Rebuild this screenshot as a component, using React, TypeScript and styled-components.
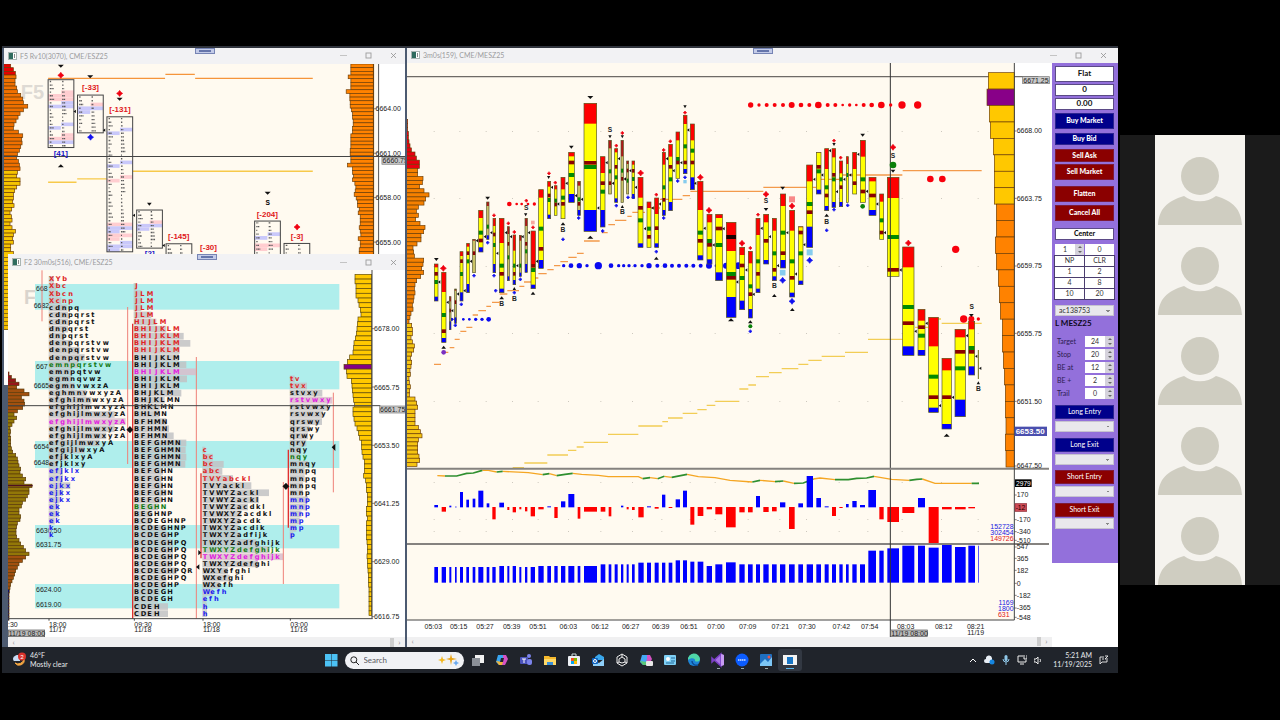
import React from "react";
import styled, { createGlobalStyle } from "styled-components";

const UI = `Lato, "Open Sans", sans-serif`;
const CHART = `"Liberation Sans", Arial, sans-serif`;
const CREAM = "#fffaf0";

const Global = createGlobalStyle`
  *, *::before, *::after { box-sizing: border-box; }
  body { margin: 0; background: #000; font-family: ${UI}; }
  button, input, select { font-family: inherit; margin: 0; }
`;

/* ---------- page frame ---------- */

const Page = styled.main`
  display: flex;
  align-items: center;
  gap: 2px;
  min-height: 100vh;
  padding-left: 2px;
  background: #000;
`;
const Desktop = styled.section`
  flex: 1;
  min-width: 0;
  background: #4c5a70;
  border-top: 2px solid #30343d;
  border-bottom: 1px solid #000;
`;
const Workspace = styled.div`
  display: grid;
  grid-template-columns: 401fr 711fr;
  gap: 2px;
  padding-left: 2px;
`;
const LeftStack = styled.div`
  display: flex;
  flex-direction: column;
  min-width: 0;
`;
const LowerRow = styled.div`
  display: flex;
`;
const HiddenEdge = styled.div`
  width: 4px;
  flex: none;
  background:
    repeating-linear-gradient(transparent 0 3px, #8a6a10 3px 4px) 0 0 / 100% 76px no-repeat,
    linear-gradient(#ffc800, #f0bc00) 0 0 / 100% 76px no-repeat,
    linear-gradient(#fff, #fff) 0 76px / 100% 55px no-repeat;
`;
const Frame = styled.article`
  position: relative;
  flex: 1;
  min-width: 0;
  display: flex;
  flex-direction: column;
  background: #fff;
`;
const TitleBar = styled.header<{ $h: number; $end: number }>`
  height: ${(p) => p.$h}px;
  display: flex;
  align-items: center;
  gap: 3px;
  padding: 0 ${(p) => p.$end}px 0 4px;
  background: #f2f2f4;
  color: #9b9b9d;
  font-size: 7px;
  line-height: 10px;
`;
const TitleText = styled.h2`
  flex: 1;
  margin: 0;
  font-size: 7px;
  font-weight: 400;
  white-space: nowrap;
`;
const WinButtons = styled.div`
  display: flex;
  gap: 16px;
`;
const WinButton = styled.button`
  width: 9px;
  height: 9px;
  padding: 0;
  border: 0;
  background: none;
  display: grid;
  place-items: center;
`;
const DockTab = styled.span`
  position: absolute;
  top: 0;
  left: 50%;
  width: 20px;
  height: 6px;
  transform: translateX(-50%);
  background: #c3cbe8;
  border: 1px solid #7684b4;
  &::after {
    content: "";
    display: block;
    margin: 1px 3px;
    height: 2px;
    background: #6575ab;
  }
`;
const Plot = styled.svg`
  display: block;
  width: 100%;
  height: auto;
  font-family: ${CHART};
`;
const ScrollTrack = styled.div`
  height: 10px;
  display: flex;
  align-items: center;
  justify-content: flex-end;
  gap: 3px;
  padding: 0 3px;
  background: #f0f0f1;
`;
const ScrollArrow = styled.button<{ $first?: boolean }>`
  width: 5px;
  height: 8px;
  padding: 0;
  border: 0;
  background: none;
  color: #8c8c8c;
  font-size: 8px;
  line-height: 7px;
  margin-right: ${(p) => (p.$first ? "auto" : "0")};
`;
const ScrollThumb = styled.span`
  width: 4px;
  height: 9px;
  background: #cdcdcd;
`;
const TradeBody = styled.div`
  display: flex;
  flex: 1;
`;
const ChartColumn = styled.div`
  flex: 1;
  min-width: 0;
`;

function WindowFrame({ title, bar, end = 7, children }: { title: string; bar: number; end?: number; children: React.ReactNode }) {
  return (
    <Frame>
      <TitleBar $h={bar} $end={end}>
        <svg width="9" height="8" viewBox="0 0 9 8" aria-hidden="true">
          <rect x=".5" y=".5" width="8" height="7" fill="#fff" stroke="#a9b5b2" />
          <rect x="1" y="1" width="4" height="6" fill="#2f6b5e" />
          <rect x="6" y="2" width="1" height="4" fill="#888" />
        </svg>
        <TitleText>{title}</TitleText>
        <WinButtons>
          <WinButton aria-label="Minimize">
            <svg width="7" height="7"><path d="M0 3.5H7" stroke="#c4c4c4" /></svg>
          </WinButton>
          <WinButton aria-label="Maximize">
            <svg width="7" height="7"><rect x="1" y="1" width="5" height="5" fill="none" stroke="#9c9c9c" strokeWidth=".9" /></svg>
          </WinButton>
          <WinButton aria-label="Close">
            <svg width="7" height="7"><path d="M1 1L6 6M6 1L1 6" stroke="#8f8f8f" strokeWidth=".8" /></svg>
          </WinButton>
        </WinButtons>
      </TitleBar>
      <DockTab />
      {children}
    </Frame>
  );
}

function Scroller() {
  return (
    <ScrollTrack>
      <ScrollArrow $first aria-label="Scroll left">‹</ScrollArrow>
      <ScrollThumb />
      <ScrollArrow aria-label="Scroll right">›</ScrollArrow>
    </ScrollTrack>
  );
}

/* ---------- chart pieces: three chart units to one pixel ---------- */

type MarkKind = "down" | "up" | "downS" | "upS" | "downL" | "upL" | "left" | "right" | "red" | "redS" | "blue" | "blueS";

function Mark({ kind, x, y }: { kind: MarkKind; x: number; y: number }) {
  if (kind === "left")
    return <path d={`M${x - 5} ${y}l7 -5v10z`} fill="#111" />;
  if (kind === "right") return <path d={`M${x + 6} ${y}l-9 -8v16z`} fill="#111" />;
  if (kind.startsWith("red") || kind.startsWith("blue")) {
    const r = kind.endsWith("S") ? 5 : 9;
    const t = r * 0.42;
    return (
      <path
        d={`M${x} ${y - r}L${x + t} ${y - t}L${x + r} ${y}L${x + t} ${y + t}L${x} ${y + r}L${x - t} ${y + t}L${x - r} ${y}L${x - t} ${y - t}Z`}
        fill={kind.startsWith("red") ? "#f00010" : "#1010f0"}
        stroke={kind.startsWith("red") ? "#f00010" : "#1010f0"}
        strokeWidth="2"
      />
    );
  }
  const w = kind.endsWith("S") ? 5 : kind.endsWith("L") ? 9 : 7;
  const d = kind.startsWith("down") ? 1 : -1;
  return <path d={`M${x - w} ${y - 4 * d}h${w * 2}l${-w} ${9 * d}z`} fill="#111" />;
}

function Profile(p: {
  x: number; y: number; pitch: number; rows: number[]; toLeft?: boolean;
  fill: (y: number, i: number) => string; line?: string;
}) {
  return (
    <g stroke={p.line ?? "#6b3c05"} strokeWidth="2">
      {p.rows.map((w, i) => {
        const y = p.y + i * p.pitch;
        return <rect key={i} x={p.toLeft ? p.x - w : p.x} y={y} width={w} height={p.pitch} fill={p.fill(y, i)} />;
      })}
    </g>
  );
}

type Seg = [number, number, number];
function Dashes({ list, color }: { list: Seg[]; color: string }) {
  return <path d={list.map(([a, b, y]) => `M${a} ${y}H${b}`).join("")} stroke={color} strokeWidth="4" fill="none" />;
}

/* ---------- F5 footprint chart ---------- */

const f5Left = [22, 30, 36, 38, 35, 35, 40, 42, 52, 58, 60, 73, 60, 50, 44, 38, 32, 30, 45, 58, 55, 56, 52, 48, 42, 40, 45, 48, 50, 42, 40, 50, 50, 40, 34, 30, 30, 28, 32, 25, 20, 24, 26, 20, 26, 36, 30, 28, 30, 22, 22, 30];
const f5RightEdges = [450, 450, 450, 442, 450, 450, 450, 436, 447, 447, 448, 448, 452, 455, 455, 457, 457, 455, 455, 450, 450, 450, 450, 448, 448, 450, 450, 440, 455, 455, 458, 455, 462, 465, 463, 460, 466, 470, 470, 475, 472, 478, 478, 478, 475, 478, 480, 472, 478, 478, 475, 475];

interface PrintBox { x: number; top: number; bottom: number; tint: [number, "l" | "r" | "b", "p" | "b"][] }
const prints: PrintBox[] = [
  { x: 144, top: 107, bottom: 310, tint: [[3, "r", "p"], [4, "b", "p"], [5, "b", "p"], [6, "r", "b"], [7, "b", "b"], [12, "r", "b"], [13, "l", "b"], [15, "r", "p"], [16, "b", "p"], [17, "b", "b"]] },
  { x: 232, top: 153, bottom: 266, tint: [[2, "r", "p"], [3, "b", "b"], [4, "l", "b"]] },
  { x: 320, top: 218, bottom: 622, tint: [[3, "r", "b"], [4, "l", "b"], [12, "r", "b"], [13, "l", "b"], [16, "r", "p"], [17, "l", "p"], [29, "b", "p"], [30, "b", "b"], [31, "l", "b"], [32, "b", "p"], [33, "l", "p"], [34, "r", "b"], [35, "b", "b"], [36, "l", "b"]] },
  { x: 409, top: 497, bottom: 611, tint: [[3, "r", "p"], [4, "b", "b"], [5, "l", "b"]] },
  { x: 497, top: 598, bottom: 642, tint: [] },
  { x: 762, top: 530, bottom: 642, tint: [[3, "r", "b"], [4, "l", "b"], [6, "b", "p"], [7, "l", "p"]] },
  { x: 850, top: 597, bottom: 642, tint: [] },
];

function Footprint({ x, top, bottom, tint }: PrintBox) {
  const n = Math.round((bottom - top) / 10.8);
  const step = (bottom - top) / n;
  return (
    <g>
      <rect x={x} y={top} width="77" height={bottom - top} fill={CREAM} />
      {tint.map(([r, side, c], i) => (
        <rect
          key={i}
          x={side === "r" ? x + 39 : x}
          width={side === "b" ? 77 : 38}
          y={top + r * step}
          height={step}
          fill={c === "p" ? "#ffcdd0" : "#c9c8fa"}
        />
      ))}
      {Array.from({ length: n }, (_, r) => {
        const a = 3 + ((r * 37 + x) % 11);
        const b = 3 + ((r * 23 + x) % 11);
        return (
          <g key={r} stroke="#5a5a5a" strokeWidth="4" strokeDasharray="4 1">
            <path d={`M${x + 5} ${top + (r + 0.5) * step}h${a}M${x + 42} ${top + (r + 0.5) * step}h${b}`} />
          </g>
        );
      })}
      <rect x={x} y={top} width="77" height={bottom - top} fill="none" stroke="#444" strokeWidth="3" />
    </g>
  );
}

const f5Marks: [MarkKind, number, number][] = [
  ["downL", 182, 66], ["downL", 270, 98], ["downL", 358, 165], ["down", 447, 479], ["downL", 801, 446], ["upL", 182, 365],
  ["red", 182, 94], ["red", 358, 148], ["red", 889, 548], ["blue", 271, 279],
  ["left", 225, 202], ["left", 313, 258], ["left", 402, 513], ["left", 491, 603],
];
const f5Deltas: [string, number, number, string][] = [
  ["[-33]", 271, 137, "#e01820"], ["[-131]", 359, 204, "#e01820"], ["[41]", 182, 336, "#1515c8"], ["[-145]", 535, 584, "#e01820"],
  ["[2]", 448, 635, "#1515c8"], ["[-30]", 624, 617, "#e01820"], ["[-204]", 800, 517, "#e01820"], ["[-3]", 889, 584, "#e01820"],
];

function F5Chart() {
  return (
    <Plot viewBox="12 60 1200 570" role="img" aria-label="ESZ25 footprint chart">
      <rect x="12" y="60" width="1121" height="570" fill={CREAM} />
      <text x="62" y="164" fontSize="60" fontWeight="700" fill="#dedad4">F5</text>
      <Profile x={10} y={60} pitch={11} rows={f5Left} fill={(y) => (y < 93 ? "#e50000" : y < 370 ? "#f07000" : "#f5c400")} />
      <Profile x={1117} y={60} pitch={11} toLeft rows={f5RightEdges.map((e) => 517 - e)} fill={() => "#ff8200"} />
      <Dashes list={[[144, 494, 103], [495, 583, 91], [584, 936, 103]]} color="#f5953a" />
      <Dashes list={[[144, 229, 414], [231, 319, 404], [398, 936, 381]]} color="#f7c94a" />
      <path d="M1133 60V630" stroke="#555" strokeWidth="3" />
      <path d="M1118 60V630" stroke="#6b3c05" strokeWidth="3" />
      {prints.map((p) => <Footprint key={p.x} {...p} />)}
      <path d="M12 337H1215" stroke="#444" strokeWidth="3" />
      {f5Marks.map(([k, x, y], i) => <Mark key={i} kind={k} x={x} y={y} />)}
      <g fontSize="24" fontWeight="700" textAnchor="middle">
        {f5Deltas.map(([t, x, y, c]) => <text key={t} x={x} y={y} fill={c}>{t}</text>)}
      </g>
      <text x="801" y="483" fontSize="20" fontWeight="700" textAnchor="middle">S</text>
      <g fontSize="21" fill="#222">
        {["6664.00", "6661.00", "6658.00", "6655.00"].map((t, i) => (
          <React.Fragment key={t}>
            <path d={`M1118 ${194 + i * 133}h8`} stroke="#444" strokeWidth="2" />
            <text x="1124" y={202 + i * 133}>{t}</text>
          </React.Fragment>
        ))}
      </g>
      <rect x="1143" y="340" width="80" height="20" fill="#c9c9c9" stroke="#777" strokeWidth="2" />
      <text x="1145" y="357" fontSize="21" fill="#222">6660.75</text>
    </Plot>
  );
}

/* ---------- F2 market profile ---------- */

type Tpo = [string, number];
interface Session { x: number; first: number; rows: Tpo[]; ink: (row: number) => string }
const RED = "#e02424", BLUE = "#1c1cf0", GREEN = "#137a13", PINK = "#e020e0", INK = "#101010";

const sessions: Session[] = [
  {
    x: 147, first: 0,
    ink: (r) => (r < 4 ? RED : r === 12 ? GREEN : r === 20 ? PINK : r > 26 ? BLUE : INK),
    rows: [["XYb", 163], ["Xbc", 170], ["Xbcn", 175], ["Xcnp", 185], ["cdnpq", 203], ["cdnpqrst", 205], ["cdnpqrst", 205], ["dnpqrst", 205], ["dnpqrst", 195], ["denpqrstvw", 215], ["denpqrstvw", 240], ["denpqrstvw", 255], ["emnpqrstvw", 235], ["emnpqtvw", 215], ["egmnqvwz", 215], ["egmnvwxzA", 225], ["eghmnvwxyzA", 260], ["efghimnwxyzA", 275], ["efghijlmwxyzA", 270], ["efghijlmwxyzA", 345], ["efghijlmwxyzA", 378], ["efghijlmwxyzA", 345], ["efghijlmwxyzA", 320], ["efgijlmwxyA", 300], ["efgijlwxyA", 255], ["efjklxyA", 205], ["efjklxy", 175], ["efjklx", 190], ["efjkx", 190], ["ejkx", 212], ["ejkx", 190], ["ejkx", 180], ["ek", 178], ["ek", 178], ["ek", 165], ["k", 155], ["k", 153]],
  },
  {
    x: 402, first: 1,
    ink: (r) => (r < 11 ? RED : r === 13 ? PINK : r === 32 ? GREEN : INK),
    rows: [["J", 412], ["JLM", 425], ["JLM", 425], ["JLM", 425], ["JLM", 455], ["HIJLM", 470], ["BHIJKLM", 500], ["BHIJKLM", 552], ["BHIJKLM", 572], ["BHIJKLM", 540], ["BHIJKLM", 538], ["BHIJKLM", 560], ["BHIJKLM", 588], ["BHIJKLM", 562], ["BHIJKLM", 538], ["BHJKLM", 545], ["BHJKLMN", 495], ["BHKLMN", 480], ["BHLMN", 480], ["BFHMN", 500], ["BFHMN", 508], ["BFHMN", 522], ["BEFGHMN", 560], ["BEFGHMN", 558], ["BEFGHMN", 560], ["BEFGHMN", 557], ["BEFGHN", 490], ["BEFGHN", 485], ["BEFGHN", 490], ["BEFGHN", 500], ["BEFGHN", 485], ["BEGHN", 475], ["BEGHNP", 455], ["BCDEGHNP", 455], ["BCDEGHNP", 500], ["BCDEGHP", 505], ["BCDEGHPQ", 520], ["BCDEGHPQ", 520], ["BCDEGHPQ", 520], ["BCDEGHPQ", 515], ["BCDEGHPQR", 530], ["BCDEGHPQ", 500], ["BCDEGHP", 500], ["BCDEGH", 480], ["BCDEGH", 475], ["CDEH", 505], ["CDEH", 505]],
  },
  {
    x: 608, first: 24,
    ink: (r) => (r < 29 ? RED : r === 38 ? GREEN : r === 39 ? PINK : r > 43 ? BLUE : INK),
    rows: [["c", 617], ["bc", 640], ["bc", 672], ["abc", 668], ["TVYabckl", 700], ["TVYackl", 755], ["TVWYZackl", 808], ["TVWYZackl", 778], ["TVWYZacdkl", 745], ["TVWXYZacdkl", 725], ["TWXYZacdk", 720], ["TWXYZacdik", 715], ["TWXYZadfijk", 722], ["TWXYZadfghijk", 770], ["TWXYZdefghijk", 810], ["TWXYZdefghijk", 850], ["TWXYZdefghi", 775], ["WXYefghi", 685], ["WXefghi", 690], ["WXefh", 660], ["Wefh", 640], ["efh", 620], ["h", 622], ["h", 622]],
  },
  {
    x: 870, first: 14,
    ink: (r) => (r < 16 ? RED : r === 17 ? PINK : r === 25 ? GREEN : r > 30 ? BLUE : INK),
    rows: [["tv", 885], ["tvx", 922], ["stvxy", 968], ["rstvwxy", 998], ["rstvwxy", 985], ["rsvwxy", 970], ["qrswy", 967], ["qrswy", 930], ["qrwy", 925], ["qry", 920], ["nqy", 905], ["nqy", 900], ["mnqy", 925], ["mnpq", 915], ["mnpq", 915], ["mnpq", 910], ["mnp", 910], ["mnp", 925], ["mnp", 922], ["mnp", 905], ["mp", 900], ["mp", 890], ["p", 880]],
  },
];

const ROW = 21.34;
const cell = (ch: string) => {
  if ("ijl".includes(ch)) return 12;
  if ("frt".includes(ch)) return 15;
  if ("sz".includes(ch)) return 17;
  if ("IJL".includes(ch)) return 19;
  if ("MW".includes(ch)) return 23;
  if (ch === "w") return 24;
  if (ch === "m") return 26;
  return ch === ch.toUpperCase() ? 20 : 19;
};
const slots = (x: number, text: string) => {
  let at = x;
  return [...text].map((ch) => { const here = at + ("IJ".includes(ch) ? 4 : 0); at += cell(ch); return here; }).join(" ");
};

const f2Left = [5, 12, 25, 35, 28, 50, 65, 42, 50, 52, 46, 30, 20, 28, 20, 14, 8, 10, 8, 10, 10, 10, 12, 16, 25, 30, 32, 35, 40, 38, 45, 55, 50, 74, 65, 65, 60, 55, 45, 42, 35, 35, 40, 38, 30, 28, 26, 26, 28, 35, 40, 48, 55, 65, 55, 45, 35, 30, 25, 22, 18, 14, 10, 8, 6, 5, 5, 5, 5, 5, 5, 5, 5];
const f2RightEdges = [466, 466, 469, 469, 469, 475, 478, 482, 484, 475, 473, 472, 470, 467, 463, 462, 460, 450, 443, 433, 440, 442, 455, 457, 458, 460, 462, 465, 460, 460, 463, 466, 472, 476, 480, 485, 486, 487, 490, 494, 494, 494, 492, 498, 500, 500, 503, 503, 503, 500, 500, 503, 500, 500, 500, 500, 502, 503, 503, 502, 503, 504, 505, 506, 506, 507, 508, 508, 508, 508, 508, 508];

function F2Chart() {
  return (
    <Plot viewBox="24 54 1191 1101" role="img" aria-label="ESZ25 thirty minute market profile">
      <rect x="24" y="54" width="1092" height="1046" fill={CREAM} />
      {[[96, 77], [327, 85], [567, 81], [819, 70], [996, 73]].map(([y, h]) => (
        <rect key={y} x="105" y={y} width="913" height={h} fill="#afeeec" />
      ))}
      <text x="72" y="155" fontSize="58" fontWeight="700" fill="#d9d4cd">F</text>
      <g fontSize="21" fill="#222">
        {([["668", 118], ["6682", 168], ["667", 351], ["6665", 408], ["6654", 590], ["6648", 640], ["6630.50", 844], ["6631.75", 884], ["6624.00", 1020], ["6619.00", 1065]] as [string, number][]).map(([t, y]) => (
          <text key={y} x={t.length === 4 ? 101 : 108} y={y}>{t}</text>
        ))}
      </g>
      <Profile
        x={22} y={360} pitch={10.2} rows={f2Left} line="#5a3a08"
        fill={(y) => (y < 395 ? "#98151a" : y < 480 ? "#a2500f" : y < 910 ? "#927708" : y < 1010 ? "#a2500f" : "#101068")}
      />
      <path d="M24 701H98" stroke="#501020" strokeWidth="4" />
      <Profile x={1115} y={67} pitch={14.22} toLeft rows={f2RightEdges.map((e) => 516 - e)} fill={(_, i) => (i === 19 ? "#850085" : "#ffc800")} line="#5c4708" />
      {sessions.map((s) => (
        <g key={s.x}>
          {s.rows.map(([, end], i) => (
            <rect key={i} x={s.x - 1} y={81 + (s.first + i) * ROW - 9} width={end - s.x} height="20" fill={s.ink(s.first + i) === PINK ? "#d9bccb" : "#c2c2c4"} opacity=".85" />
          ))}
        </g>
      ))}
      <path d="M126 55V208M383 165V636M850 690V996M1000 422V721M589 315V1100" stroke="#ee8078" strokeWidth="3" />
      <path d="M398 215V1100M865 593V827M603 664V919" stroke="#e03030" strokeWidth="4" />
      {sessions.map((s) => (
        <g key={s.x} fontFamily='"DejaVu Sans", Verdana, sans-serif' fontWeight="700" fontSize="20">
          {s.rows.map(([t], i) => (
            <text key={i} x={slots(s.x, t)} y={88 + (s.first + i) * ROW} fill={s.ink(s.first + i)}>{t}</text>
          ))}
        </g>
      ))}
      <path d="M24 461H1141M24 1100H1118M1116 54V1100" stroke="#444" strokeWidth="3" />
      <path d="M380 533l10 -10 9 10 -9 10zM848 703l10 -10 9 10 -9 10z" fill="#111" stroke="#111" />
      <Mark kind="right" x={598} y={902} />
      <path d="M588 945l10 -8v16zM995 586l11 -11v22z" fill="#111" />
      <g fontSize="21" fill="#222">
        {([["6678.00", 230], ["6665.75", 405], ["6653.50", 580], ["6641.25", 754], ["6629.00", 929], ["6616.75", 1094]] as [string, number][]).map(([t, y]) => (
          <React.Fragment key={t}>
            <path d={`M1116 ${y}h7`} stroke="#444" strokeWidth="2" />
            <text x="1122" y={y + 8}>{t}</text>
          </React.Fragment>
        ))}
        <rect x="1139" y="462" width="79" height="21" fill="#c9c9c9" stroke="#777" strokeWidth="2" />
        <text x="1140" y="480">6661.75</text>
        <text x="24" y="1125">:30</text>
        {([["18:00", "11/17", 147], ["09:30", "11/18", 403], ["18:00", "11/18", 609], ["03:00", "11/19", 871]] as [string, string, number][]).map(([t, d, x]) => (
          <React.Fragment key={x}>
            <path d={`M${x} 1100v6`} stroke="#444" strokeWidth="3" />
            <text x={x} y="1124">{t}</text>
            <text x={x} y="1141">{d}</text>
          </React.Fragment>
        ))}
        <rect x="25" y="1134" width="109" height="20" fill="#b9b9b9" stroke="#555" strokeWidth="2" />
        <text x="26" y="1151">11/19 08:00</text>
      </g>
    </Plot>
  );
}

/* ---------- three minute MESZ25 chart ---------- */

/* x, width, high, red end, blue start, low, green level, maroon level, narrow */
type Candle = [number, number, number, number, number, number, number, number, boolean?];
const shift = (dx: number, list: Candle[]): Candle[] => list.map(([x, ...rest]) => [x + dx, ...rest] as Candle);

const candles: Candle[] = [
  [88, 11, 660, 670, 758, 771, 714, 690], [110, 13, 685, 744, 882, 895, 813, 862], [133, 5, 758, 772, 832, 857, 0, 800, true],
  [149, 5, 735, 740, 820, 838, 0, 775, true], [165, 9, 623, 636, 745, 771, 690, 652], [185, 8, 598, 608, 720, 746, 652, 628],
  [203, 8, 586, 590, 686, 686, 0, 628, true], [221, 13, 499, 522, 610, 624, 566, 590], [245, 7, 474, 486, 574, 586, 548, 0, true],
  [264, 8, 523, 546, 660, 686, 603, 572], [283, 14, 523, 597, 734, 746, 665, 690], [307, 6, 548, 570, 697, 710, 640, 600, true],
  [324, 8, 573, 620, 708, 722, 665, 690], [343, 6, 574, 590, 686, 697, 665, 0, true], [360, 7, 523, 546, 660, 685, 622, 600, true],
  [378, 13, 561, 660, 722, 734, 678, 666], [401, 14, 437, 461, 648, 673, 554, 615], [428, 9, 412, 428, 512, 524, 468, 455],
  [448, 8, 425, 436, 514, 514, 470, 482], [468, 12, 400, 436, 524, 524, 461, 480], [491, 17, 325, 337, 450, 475, 393, 356],
  [518, 8, 412, 425, 498, 514, 466, 480, true], [537, 38, 178, 239, 498, 562, 369, 357], [586, 14, 338, 387, 498, 549, 443, 418],
  [611, 8, 289, 313, 450, 450, 382, 418, true], [629, 9, 314, 325, 463, 475, 400, 369], [648, 7, 289, 337, 475, 475, 380, 405, true],
  [665, 6, 351, 360, 450, 450, 410, 380, true], [681, 8, 351, 362, 450, 463, 405, 381], [699, 15, 400, 461, 598, 610, 529, 492],
  ...shift(705, [
    [21, 12, 474, 492, 610, 610, 554, 579], [44, 12, 462, 510, 598, 610, 0, 553], [67, 9, 325, 362, 498, 514, 430, 468],
    [86, 11, 301, 338, 474, 500, 406, 369], [108, 11, 264, 289, 403, 403, 345, 356], [130, 11, 214, 240, 375, 389, 307, 356],
    [151, 12, 240, 289, 400, 437, 320, 356], [173, 16, 412, 498, 634, 648, 566, 591], [201, 15, 511, 535, 646, 660, 591, 603],
    [227, 20, 511, 522, 685, 710, 603, 554], [259, 29, 535, 621, 759, 820, 690, 702], [299, 15, 610, 633, 770, 797, 702, 665],
    [325, 12, 622, 658, 795, 822, 727, 751], [348, 12, 523, 573, 734, 746, 652, 690], [371, 15, 511, 535, 648, 660, 0, 591],
    [397, 12, 523, 560, 697, 710, 628, 678], [421, 16, 450, 486, 648, 672, 566, 628], [449, 15, 499, 560, 746, 759, 652, 702],
    [475, 14, 548, 550, 710, 722, 628, 566], [500, 18, 363, 412, 548, 610, 480, 505], [529, 14, 325, 326, 437, 450, 382, 369],
    [554, 12, 314, 375, 486, 500, 430, 455], [576, 11, 314, 340, 474, 490, 406, 393], [598, 10, 351, 388, 474, 488, 406, 430],
    [619, 6, 338, 360, 475, 475, 393, 0], [638, 12, 325, 375, 450, 450, 0, 418], [661, 15, 289, 338, 475, 475, 406, 443],
    [687, 21, 400, 412, 498, 514, 0, 455],
  ]),
  ...shift(1365, [
    [59, 12, 450, 473, 586, 586, 529, 566], [82, 35, 400, 462, 697, 697, 579, 678], [128, 34, 609, 670, 907, 934, 789, 838],
    [174, 21, 796, 830, 918, 934, 875, 850], [206, 29, 820, 907, 1091, 1105, 998, 1060], [246, 28, 943, 979, 1140, 1155, 0, 1060],
    [285, 31, 856, 880, 1067, 1118, 973, 924], [326, 18, 832, 856, 967, 993, 912, 924],
  ]),
];

function CandleBar({ c: [x, w, hi, red, blue, lo, green, maroon, narrow] }: { c: Candle }) {
  return (
    <g>
      <rect x={x} y={hi} width={w} height={lo - hi} fill={narrow ? "#c9c267" : "#ffff00"} />
      <rect x={x} y={hi} width={w} height={red - hi} fill={narrow ? "#b01818" : "#ff0000"} />
      <rect x={x} y={blue} width={w} height={lo - blue} fill="#0000ff" />
      {green > 0 && <rect x={x} y={green - 6} width={w} height="12" fill="#008a00" />}
      {maroon > 0 && <rect x={x} y={maroon - 6} width={w} height="11" fill="#8b0000" />}
      <rect x={x} y={hi} width={w} height={lo - hi} fill="none" stroke="#55552a" strokeWidth="2" />
    </g>
  );
}

const mark = (kind: MarkKind, dx: number, pts: [number, number][]): [MarkKind, number, number][] => pts.map(([x, y]) => [kind, x + dx, y]);
const tradeMarks = [
  ...mark("down", 0, [[94, 646], [248, 462], [499, 309]]),
  ...mark("downS", 0, [[362, 512], [615, 278], [652, 278], [431, 400]]),
  ...mark("downL", 0, [[556, 160]]),
  ...mark("up", 0, [[116, 910], [290, 762], [384, 748], [474, 540]]),
  ...mark("upS", 0, [[328, 734], [652, 488]]),
  ...mark("upL", 0, [[556, 580]]),
  ...mark("redS", 0, [[267, 514], [310, 538], [328, 564], [384, 550], [432, 388], [451, 416], [634, 305], [652, 267], [364, 470]]),
  ...mark("red", 0, [[115, 673], [707, 387]]),
  ...mark("blueS", 0, [[169, 781], [151, 844], [207, 695], [248, 596], [267, 695], [272, 740], [346, 706], [328, 746], [474, 586], [521, 522], [593, 561], [634, 485], [669, 460], [685, 460]]),
  ...mark("left", 0, [[104, 714], [129, 775], [143, 800], [160, 750], [180, 740], [199, 652], [217, 590], [241, 578], [260, 566], [278, 628], [304, 566], [319, 578], [338, 665], [354, 578], [373, 566], [397, 652], [442, 430], [461, 480], [486, 418], [514, 455], [532, 466], [581, 492], [606, 356], [625, 418], [643, 344], [661, 405], [677, 380], [694, 430]]),
  ...mark("downS", 705, [[135, 188], [582, 301]]),
  ...mark("down", 705, [[428, 432], [378, 496], [668, 273]]),
  ...mark("up", 705, [[49, 643], [331, 834], [403, 755], [457, 797], [560, 514]]),
  ...mark("upL", 705, [[273, 828]]),
  ...mark("red", 705, [[181, 400], [207, 499], [306, 598], [378, 451], [456, 486]]),
  ...mark("redS", 705, [[49, 452], [71, 318], [91, 292], [135, 206], [331, 612], [354, 512], [582, 290], [602, 341]]),
  ...mark("blueS", 705, [[49, 623], [71, 522], [113, 411], [135, 400], [331, 862], [560, 559], [582, 497], [623, 484]]),
  ...mark("blue", 705, [[428, 709], [456, 772], [509, 649]]),
  ...mark("left", 705, [[16, 554], [39, 492], [61, 480], [82, 344], [102, 380], [125, 356], [146, 258], [167, 418], [195, 553], [222, 603], [252, 554], [293, 714], [320, 678], [342, 751], [366, 553], [391, 578], [415, 665], [443, 566], [469, 690], [494, 602], [524, 406], [548, 393], [571, 320], [592, 443], [614, 406], [632, 393], [656, 331], [682, 442], [713, 480]]),
  ...mark("red", 1365, [[99, 310], [145, 597]]),
  ...mark("down", 1365, [[99, 381], [334, 814]]),
  ...mark("upL", 1365, [[260, 1174]]),
  ...mark("upS", 1365, [[355, 1017]]),
  ...mark("left", 1365, [[76, 566], [123, 678], [168, 862], [201, 838], [241, 1085], [280, 1060], [322, 875], [350, 937], [362, 973]]),
];

type Dot = [number, number, number];
const redDots: Dot[] = [
  [313, 480, 7], [335, 480, 4], [350, 480, 4], [369, 480, 4], [388, 480, 5],
  ...([[332, 8], [357, 5], [380, 6], [404, 6], [429, 6], [455, 9], [483, 7], [508, 6], [535, 10], [563, 6], [586, 6], [608, 4], [629, 5], [649, 4], [671, 6], [695, 7], [724, 10], [752, 5], [786, 11], [833, 11]] as [number, number][]).map(([x, r]) => [x + 705, 183, r] as Dot),
  [1576, 405, 10], [1612, 405, 10], [1652, 616, 11], [1676, 825, 11], [1699, 825, 9], [1720, 825, 5],
];
const blueDots: Dot[] = [
  ...([[140, 5], [151, 5], [175, 4], [193, 4], [212, 5], [231, 5], [251, 7]] as [number, number][]).map(([x, r]) => [x, 826, r] as Dot),
  ...([[476, 5], [498, 7], [523, 8], [546, 5], [580, 11], [618, 7], [641, 5], [656, 5], [672, 5], [690, 5], [711, 5], [732, 8], [757, 6], [780, 7], [801, 6], [822, 6], [844, 6], [865, 6], [887, 6], [912, 9], [933, 4], [963, 9], [1000, 10]] as [number, number][]).map(([x, r]) => [x, 665, r] as Dot),
];

const orangeSteps: Seg[] = [
  [87, 108, 961], [116, 130, 925], [134, 148, 911], [149, 164, 886], [166, 184, 862], [184, 202, 850], [203, 219, 813], [220, 243, 800], [244, 258, 787], [261, 283, 775], [284, 307, 750], [307, 342, 740], [343, 358, 727], [357, 378, 714], [390, 400, 702], [400, 425, 689], [427, 446, 677], [447, 466, 665], [466, 489, 653], [490, 515, 640], [516, 536, 628], [537, 584, 591], [590, 608, 566], [610, 630, 542], [630, 664, 529], [667, 680, 517], [682, 720, 505],
  [738, 765, 492], [765, 832, 466], [833, 855, 455], [856, 1075, 442], [1075, 1233, 430], [1233, 1305, 406], [1305, 1492, 393], [1493, 1730, 380],
];
const yellowSteps: Seg[] = [
  [323, 357, 1271], [358, 427, 1257], [427, 489, 1233], [489, 514, 1219], [515, 536, 1209], [536, 609, 1195], [609, 700, 1171], [700, 772, 1146], [772, 789, 1133], [789, 833, 1122], [833, 877, 1108], [877, 905, 1097], [905, 931, 1084], [931, 1003, 1072], [1003, 1030, 1035], [1030, 1053, 1023], [1053, 1092, 998], [1092, 1130, 986], [1130, 1180, 974], [1180, 1210, 961], [1210, 1250, 949], [1250, 1320, 937], [1320, 1389, 925], [1389, 1493, 886], [1530, 1570, 850], [1585, 1608, 825], [1610, 1730, 838],
];

const tradeLeft = [6, 6, 6, 8, 8, 10, 13, 17, 28, 32, 41, 41, 36, 36, 52, 50, 42, 55, 70, 60, 55, 38, 32, 38, 30, 43, 58, 54, 46, 46, 34, 22, 24, 26, 54, 52, 48, 54, 45, 33, 28, 26, 28, 25, 23, 20, 22, 16, 13, 10, 18, 20, 20, 16, 20, 26, 24, 18, 14, 18, 16, 13, 14, 10, 11, 14, 12, 11, 28, 33, 36, 28, 28, 28, 28, 38, 44, 49, 38, 36, 36, 36, 40, 42, 34];
const tradeRightEdges = [385, 381, 388, 391, 400, 403, 403, 403, 409, 409, 406, 409, 415, 418, 421, 427, 427, 430, 433, 436, 436, 438, 436, 438];

/* x, width, delta (positive is up), total */
const flow: [number, number, number, number][] = [
  [88, 11, 6, 47], [110, 13, -13, 47], [133, 6, 4, 47], [150, 5, 1, 47], [165, 9, 45, 47], [184, 8, 22, 47], [203, 8, 25, 47], [220, 15, 49, 47], [245, 8, 11, 47], [262, 10, -36, 47], [283, 14, 13, 50], [307, 6, -8, 50], [323, 10, -15, 50], [343, 6, -6, 47], [360, 7, -12, 47], [377, 13, -27, 47], [400, 16, -6, 50], [427, 11, 2, 50], [448, 10, -32, 50], [468, 13, 17, 50], [490, 18, 39, 50], [518, 8, -34, 50], [537, 39, -13, 50], [587, 14, -13, 55], [611, 8, -27, 55], [629, 9, 0, 55], [648, 7, 4, 55], [665, 6, -6, 55], [681, 8, -8, 55], [700, 16, -30, 60], [726, 12, 2, 60], [749, 12, -4, 60], [771, 10, 37, 60], [791, 11, -2, 60], [812, 13, 23, 67], [834, 12, 49, 67], [856, 12, -52, 63], [878, 17, -26, 63], [905, 16, -6, 50], [931, 21, -21, 55], [963, 29, -60, 61],
  [1003, 16, -15, 55], [1029, 14, -15, 55], [1053, 12, 33, 55], [1075, 16, -14, 55], [1101, 14, -12, 55], [1125, 16, 14, 55], [1152, 17, -65, 55], [1180, 14, 11, 55], [1205, 19, 93, 55], [1234, 14, 27, 55], [1259, 12, 2, 55], [1281, 12, -26, 55], [1303, 10, -2, 55], [1323, 8, 9, 55], [1342, 13, 18, 55], [1365, 15, 6, 55], [1390, 23, 51, 96], [1423, 13, -36, 96], [1447, 35, -44, 103], [1492, 36, -17, 111], [1539, 21, 27, 111], [1571, 30, -109, 105], [1611, 29, -6, 114], [1650, 32, -6, 107], [1690, 20, -3, 111], [1720, 2, 0, 111],
];

const trendOrange = "M97 1295L120 1296M232 1279L250 1279L275 1284M293 1282L370 1286L413 1292M433 1289L455 1295M503 1288L530 1291L580 1294L610 1298L700 1298L713 1304M735 1301L758 1304M778 1297L800 1300M846 1291L880 1298L930 1301L975 1309L1042 1314M1065 1309L1110 1313M1135 1311L1167 1318M1225 1305L1245 1302L1290 1307M1407 1297L1460 1306L1513 1309M1552 1305L1590 1318L1700 1318";
const trendGreen = "M120 1296L155 1296L185 1288L205 1287L232 1279M275 1284L293 1282M413 1292L433 1289M455 1295L480 1291L503 1288M713 1304L735 1301M758 1304L778 1297M800 1300L846 1291M1042 1314L1065 1309M1110 1313L1135 1311M1167 1318L1195 1317L1225 1305M1290 1307L1330 1307L1355 1303L1385 1302L1407 1297M1513 1309L1535 1306L1552 1305M1700 1318L1722 1318";

const times: [string, number][] = [
  ["05:03", 85], ["05:15", 161], ["05:27", 240], ["05:39", 320], ["05:51", 399], ["06:03", 490], ["06:12", 585], ["06:27", 677], ["06:39", 767], ["06:51", 852], ["07:00", 933],
  ["07:09", 1028], ["07:21", 1126], ["07:30", 1206], ["07:42", 1309], ["07:54", 1394], ["08:03", 1502], ["08:12", 1616], ["08:21", 1712],
];
const gridX = [88, 165, 244, 323, 400, 491, 588, 683, 771, 856, 931, 1030, 1125, 1205, 1303, 1389, 1492, 1610, 1720];
const letters: [string, number, number][] = [
  ["B", 290, 787], ["B", 328, 771], ["B", 474, 565], ["B", 652, 511], ["S", 364, 497], ["S", 615, 263],
  ["S", 1083, 478], ["B", 1108, 732], ["B", 1265, 539], ["S", 1464, 341], ["S", 1700, 795], ["B", 1720, 1042],
];

function TradeChart() {
  return (
    <Plot viewBox="6 57 1935 1722" role="img" aria-label="MESZ25 three minute chart">
      <rect x="6" y="57" width="1822" height="1671" fill={CREAM} />
      <g fill="#b5b0a5">
        {gridX.flatMap((x) => [261, 463, 666, 868, 1072, 1315, 1426, 1462].map((y) => <rect key={`${x}-${y}`} x={x - 2} y={y} width="3" height="2" />))}
      </g>
      <path d="M6 98H1900" stroke="#6e6a66" strokeWidth="4" />
      <Profile x={2} y={226} pitch={12.25} rows={tradeLeft} fill={(y) => (y < 370 ? "#e80010" : y < 830 ? "#f58000" : "#f5c412")} />
      <Profile
        x={1828} y={86} pitch={49.3} toLeft rows={tradeRightEdges.map((e) => 463 - e)}
        fill={(_, i) => (i === 1 ? "#880088" : i < 8 ? "#ffc800" : "#ff8200")}
      />
      <Dashes list={orangeSteps} color="#f39a4b" />
      <Dashes list={yellowSteps} color="#f2cd55" />
      {blueDots.map(([x, y, r], i) => <circle key={i} cx={x} cy={y} r={r} fill="#0a0af0" />)}
      {candles.map((c, i) => <CandleBar key={i} c={c} />)}
      <path d="M1456 57V1274" stroke="#333" strokeWidth="3" />
      <rect x="964" y="573" width="29" height="12" fill="#1a0000" />
      <path d="M1720 918V1005" stroke="#6e6a14" strokeWidth="3" />
      {redDots.map(([x, y, r], i) => <circle key={i} cx={x} cy={y} r={r} fill="#f8000c" />)}
      <circle cx="116" cy="925" r="7" fill="#7a30c0" />
      {([[1036, 847, 6], [1373, 487, 7], [1464, 363, 10]] as Dot[]).map(([x, y, r]) => <circle key={x} cx={x} cy={y} r={r} fill="#0a800a" />)}
      {([[840, 413, 10], [1133, 686, 17], [1214, 625, 18]] as Dot[]).map(([x, y, s]) => <rect key={x} x={x - s / 2} y={y - s / 2} width={s} height={s} fill="#86ccee" />)}
      <rect x="1152" y="457" width="18" height="18" fill="#f88888" />
      <rect x="378" y="530" width="11" height="11" fill="#f6a8a0" />
      {tradeMarks.map(([k, x, y], i) => <Mark key={i} kind={k} x={x} y={y} />)}
      <g fontSize="20" fill="#222" textAnchor="middle" fontWeight="700">
        {letters.map(([t, x, y]) => <text key={`${x}`} x={x} y={y}>{t}</text>)}
      </g>

      <path d={trendOrange} fill="none" stroke="#f5a623" strokeWidth="4" />
      <path d={trendGreen} fill="none" stroke="#2f8f2f" strokeWidth="5" />
      {flow.map(([x, w, d]) => d !== 0 && (
        <rect key={x} x={x} width={w} y={d > 0 ? 1389 - d : 1389} height={Math.abs(d) + 1} fill={d > 0 ? "#0000ff" : "#ff0000"} />
      ))}
      {flow.map(([x, w, , t]) => <rect key={x} x={x} width={w} y={1616 - t} height={t} fill="#0000ff" />)}
      <path d="M6 1274H1932M6 1500H1932" stroke="#85827f" strokeWidth="6" />
      <path d="M6 1728H1828M1828 57V1728" stroke="#444" strokeWidth="3" />
      <path d="M1456 1277V1779" stroke="#333" strokeWidth="3" />

      <g fontSize="21" fill="#222">
        {([["6668.00", 261], ["6663.75", 463], ["6659.75", 666], ["6655.75", 868], ["6651.50", 1072], ["6647.50", 1266], ["170", 1353], ["-170", 1427], ["-340", 1463], ["-510", 1489], ["547", 1509], ["365", 1543], ["182", 1579], ["0", 1618], ["-182", 1654], ["-365", 1692], ["-548", 1720]] as [string, number][]).map(([t, y]) => (
          <React.Fragment key={t}>
            <path d={`M1828 ${y}h7`} stroke="#444" strokeWidth="2" />
            <text x="1835" y={y + 7}>{t}</text>
          </React.Fragment>
        ))}
        <rect x="1853" y="98" width="80" height="21" fill="#c9c9c9" stroke="#777" strokeWidth="2" />
        <text x="1855" y="116">6671.25</text>
        <g textAnchor="middle">
          {times.map(([t, x]) => <text key={t} x={x} y="1754">{t}</text>)}
          <text x="1712" y="1773">11/19</text>
        </g>
        <rect x="1457" y="1758" width="110" height="19" fill="#b9b9b9" stroke="#555" strokeWidth="2" />
        <text x="1459" y="1775">11/19 08:00</text>
      </g>
      <g fontSize="21" textAnchor="end">
        <text x="1826" y="1454" fill="#2020e0">152728</text>
        <text x="1826" y="1472" fill="#2020e0">302454</text>
        <text x="1826" y="1490" fill="#e01818">149726</text>
        <text x="1826" y="1683" fill="#2020e0">1169</text>
        <text x="1826" y="1701" fill="#2020e0">1800</text>
        <text x="1814" y="1719" fill="#e01818">631</text>
      </g>
      <rect x="1830" y="1306" width="50" height="23" fill="#000" />
      <text x="1833" y="1325" fontSize="20" fill="#fff">2979</text>
      <rect x="1830" y="1379" width="35" height="23" fill="#cc4a55" stroke="#8d2730" strokeWidth="2" />
      <text x="1832" y="1398" fontSize="20" fill="#200">-12</text>
      <rect x="1829" y="1148" width="97" height="28" fill="#4a4fae" />
      <text x="1832" y="1171" fontSize="24" fontWeight="700" fill="#fff">6653.50</text>
    </Plot>
  );
}

/* ---------- order panel ---------- */

const Panel = styled.aside`
  width: 66px;
  flex: none;
  height: 500px;
  padding: 3px 4px 0 3px;
  display: flex;
  flex-direction: column;
  background: #9370db;
  font-size: 7px;
  line-height: 9px;
`;
const Readout = styled.output<{ $h: number; $mt?: number }>`
  height: ${(p) => p.$h}px;
  margin-top: ${(p) => p.$mt ?? 0}px;
  display: grid;
  place-items: center;
  background: #fff;
  border: 1px solid #5b4a86;
  color: #111;
  font-size: 8px;
  font-weight: 700;
`;
const ActionButton = styled.button<{ $tone: "navy" | "maroon" | "white"; $h: number; $mt: number; $light?: boolean }>`
  height: ${(p) => p.$h}px;
  margin-top: ${(p) => p.$mt}px;
  padding: 0;
  border: 1px solid ${(p) => (p.$tone === "white" ? "#5b4a86" : p.$tone === "navy" ? "#2c2490" : "#7d1a38")};
  background: ${(p) => (p.$tone === "white" ? "#fff" : p.$tone === "navy" ? "#00008b" : "#8b0000")};
  color: ${(p) => (p.$tone === "white" ? "#111" : "#fff")};
  font-size: 7px;
  line-height: 9px;
  font-weight: ${(p) => (p.$light ? 400 : 900)};
`;
const QtyGrid = styled.div`
  display: grid;
  grid-template-columns: 1fr 1fr;
  gap: 1px;
  margin-top: 4px;
`;
const QtyButton = styled.button`
  height: 10px;
  padding: 0;
  border: 0;
  background: #fff;
  color: #333;
  font-size: 7px;
  line-height: 9px;
  outline: 1px solid #4b3d6e;
`;
const Spin = styled.span<{ $h: number }>`
  display: flex;
  min-width: 0;
  height: ${(p) => p.$h}px;
  background: #fff;
`;
const SpinInput = styled.input`
  flex: 1;
  width: 0;
  min-width: 0;
  padding: 0;
  border: 0;
  background: none;
  color: #333;
  text-align: center;
  font-size: 7px;
`;
const Stepper = styled.span`
  width: 9px;
  display: grid;
  grid-template-rows: 1fr 1fr;
  background: #d5d2dc;
`;
const StepButton = styled.button`
  padding: 0;
  border: 0;
  background: none;
  display: grid;
  place-items: center;
`;
const Pick = styled.select<{ $mt: number }>`
  appearance: none;
  width: 100%;
  height: 11px;
  margin-top: ${(p) => p.$mt}px;
  padding: 0 3px;
  border: 1px solid #c6c3cf;
  border-radius: 0;
  background:
    linear-gradient(45deg, transparent 50%, #888 50%) calc(100% - 5px) 4px / 2px 2px no-repeat,
    linear-gradient(-45deg, transparent 50%, #888 50%) calc(100% - 3px) 4px / 2px 2px no-repeat,
    #e9e8ec;
  color: #333;
  font-size: 7px;
  line-height: 9px;
`;
const Symbol = styled.strong`
  margin-top: 3px;
  font-size: 8px;
  line-height: 9px;
  color: #0d0820;
`;
const Fields = styled.div`
  display: grid;
  gap: 2px;
  margin-top: 8px;
`;
const Field = styled.label`
  display: grid;
  grid-template-columns: 1fr 29px;
  align-items: center;
  padding-left: 2px;
  color: #2c1c50;
`;

function Spinner({ value, h, label, id }: { value: string; h: number; label?: string; id?: string }) {
  return (
    <Spin $h={h}>
      <SpinInput id={id} aria-label={label} defaultValue={value} />
      <Stepper>
        <StepButton type="button" aria-label="Increase" tabIndex={-1}>
          <svg width="4" height="2"><path d="M0 2L2 0L4 2Z" fill="#666" /></svg>
        </StepButton>
        <StepButton type="button" aria-label="Decrease" tabIndex={-1}>
          <svg width="4" height="2"><path d="M0 0L2 2L4 0Z" fill="#666" /></svg>
        </StepButton>
      </Stepper>
    </Spin>
  );
}

const Cell = styled.output`
  height: 11px;
  background: #fff;
  text-align: center;
  color: #333;
  line-height: 11px;
`;

function OrderPanel() {
  return (
    <Panel>
      <Readout $h={16}>Flat</Readout>
      <Readout $h={12} $mt={2}>0</Readout>
      <Readout $h={12} $mt={2}>0.00</Readout>
      <ActionButton $tone="navy" $h={16} $mt={3}>Buy Market</ActionButton>
      <ActionButton $tone="navy" $h={12} $mt={4}>Buy Bid</ActionButton>
      <ActionButton $tone="maroon" $h={13} $mt={4}>Sell Ask</ActionButton>
      <ActionButton $tone="maroon" $h={16} $mt={2}>Sell Market</ActionButton>
      <ActionButton $tone="maroon" $h={16} $mt={6}>Flatten</ActionButton>
      <ActionButton $tone="maroon" $h={16} $mt={3}>Cancel All</ActionButton>
      <ActionButton $tone="white" $h={12} $mt={7}>Center</ActionButton>
      <QtyGrid>
        <Spinner value="1" h={11} label="Order quantity" />
        <Cell>0</Cell>
        {["NP", "CLR", "1", "2", "4", "8", "10", "20"].map((t) => <QtyButton key={t}>{t}</QtyButton>)}
      </QtyGrid>
      <Pick $mt={6} aria-label="Account" defaultValue="ac138753"><option>ac138753</option></Pick>
      <Symbol>L MESZ25</Symbol>
      <Fields>
        {[["Target", "24"], ["Stop", "20"], ["BE at", "12"], ["BE +", "2"], ["Trail", "0"]].map(([l, v]) => (
          <Field key={l} htmlFor={`f-${l}`}>
            {l}
            <Spinner id={`f-${l}`} value={v} h={11} />
          </Field>
        ))}
      </Fields>
      <ActionButton $tone="navy" $h={14} $mt={6} $light>Long Entry</ActionButton>
      <Pick $mt={2} aria-label="Long entry strategy" />
      <ActionButton $tone="navy" $h={14} $mt={6} $light>Long Exit</ActionButton>
      <Pick $mt={2} aria-label="Long exit strategy" />
      <ActionButton $tone="maroon" $h={14} $mt={5} $light>Short Entry</ActionButton>
      <Pick $mt={2} aria-label="Short entry strategy" />
      <ActionButton $tone="maroon" $h={14} $mt={6} $light>Short Exit</ActionButton>
      <Pick $mt={1} aria-label="Short exit strategy" />
    </Panel>
  );
}

/* ---------- taskbar ---------- */

const Taskbar = styled.nav`
  display: grid;
  grid-template-columns: 1fr auto 1fr;
  align-items: center;
  height: 26px;
  padding: 0 10px;
  background: #20242b;
  color: #e8eaee;
  font-size: 7px;
  line-height: 9px;
`;
const Weather = styled.div`
  display: flex;
  align-items: center;
  gap: 3px;
`;
const Apps = styled.div`
  display: flex;
  align-items: center;
`;
const AppButton = styled.button<{ $active?: boolean }>`
  width: 24px;
  height: 22px;
  padding: 0;
  border: 0;
  border-radius: 3px;
  background: ${(p) => (p.$active ? "#323842" : "none")};
  display: grid;
  place-items: center;
`;
const SearchBox = styled.label`
  display: flex;
  align-items: center;
  gap: 5px;
  width: 119px;
  height: 17px;
  margin: 0 2px;
  padding: 0 5px;
  border-radius: 9px;
  background: #f1f2f5;
`;
const SearchInput = styled.input`
  flex: 1;
  min-width: 0;
  padding: 0;
  border: 0;
  background: none;
  color: #333;
  font-size: 8px;
  &::placeholder { color: #5a5a5e; opacity: 1; }
`;
const Tray = styled.div`
  display: flex;
  align-items: center;
  justify-content: flex-end;
  gap: 7px;
`;
const Clock = styled.time`
  margin: 0 0 0 4px;
  text-align: right;
`;

const appIcons: [string, React.ReactNode, boolean?][] = [
  ["Task view", <><rect x="4" y="2" width="9" height="8" fill="#f2f2f2" /><rect x="1" y="5" width="8" height="8" fill="#8b9098" /></>],
  ["Copilot", <><path d="M3 2h5l2 3-3 7H4L1 9z" fill="#38a5f0" /><path d="M8 2h3l2 4-3 6H6l2-6z" fill="#d552c4" /><path d="M1 8l3 4h3l1-3z" fill="#f0b43c" /><path d="M6 5h3l-1 4H5z" fill="#20242b" /></>],
  ["Teams", <><rect x="1" y="4" width="8" height="7" rx="1" fill="#4b53bc" /><circle cx="10" cy="3" r="2" fill="#7b83eb" /><rect x="8" y="6" width="5" height="6" rx="2" fill="#7b83eb" /><path d="M3 6h4M5 6v4" stroke="#fff" /></>],
  ["File explorer", <><path d="M1 3h5l1 1h6v8H1z" fill="#f5b92c" /><rect x="1" y="6" width="12" height="6" fill="#ffd968" /><rect x="4" y="9" width="6" height="3" fill="#3a8fd8" /></>],
  ["Store", <><rect x="1" y="3" width="12" height="10" rx="1" fill="#eef1f5" /><path d="M5 3V1h4v2" stroke="#cdd" fill="none" /><rect x="4" y="5" width="3" height="3" fill="#f25022" /><rect x="7" y="5" width="3" height="3" fill="#7fba00" /><rect x="4" y="8" width="3" height="3" fill="#00a4ef" /><rect x="7" y="8" width="3" height="3" fill="#ffb900" /></>],
  ["Outlook", <><path d="M4 4l4-3 5 3v3H4z" fill="#38a6ec" /><path d="M2 7l6 3 5-4v7H2z" fill="#8fd0fa" /><rect x="1" y="5" width="6" height="6" rx="1" fill="#0f62bd" /><circle cx="4" cy="8" r="1.500" fill="none" stroke="#fff" /></>],
  ["ChatGPT", <g fill="none" stroke="#eee" strokeWidth="1"><path d="M7 1l5 3v6l-5 3-5-3V4z" /><path d="M7 4l3 2v3l-3 1-3-1V6zM7 1v3M12 10l-2-1M2 10l2-1" /></g>],
  ["Microsoft 365", <><path d="M3 2h5l2 3-3 7H4L1 9z" fill="#44a7f4" /><path d="M8 2h3l2 4-3 6H6l2-6z" fill="#d552c4" /><path d="M1 8l3 4h3l1-3z" fill="#5ac878" /><rect x="7" y="8" width="7" height="5" rx="1" fill="#e8e8e8" /></>],
  ["Control panel", <><rect x="1" y="2" width="12" height="10" rx="1" fill="#7fd0f5" /><circle cx="5" cy="6" r="2" fill="#fff" /><path d="M8 5h4M8 8h4M3 10h8" stroke="#246a9c" /></>],
  ["Edge", <><circle cx="7" cy="7" r="6" fill="#1d84d6" /><path d="M1 7a6 6 0 0 1 12-1c0 3-4 3-5 2 1-3-4-4-7-1z" fill="#4fd6a8" /><path d="M5 8c0 3 3 5 6 4" stroke="#0c4a94" strokeWidth="1.500" fill="none" /></>],
  ["Visual Studio", <><path d="M10 1l3 1v10l-3 1-9-8v4z" fill="#a974e6" /><path d="M1 5l9 8V1L1 9z" fill="none" stroke="#7a3fc4" strokeWidth="1.500" /><path d="M10 1l3 1v10l-3 1z" fill="#c79bf2" /></>, true],
  ["Zoom", <><circle cx="7" cy="7" r="6.500" fill="#0b5cff" /><path d="M3 7h8" stroke="#cfe0ff" strokeWidth="1.500" strokeDasharray="1.500 .5" /></>, true],
  ["Photos", <><rect x="1" y="1" width="12" height="12" rx="1" fill="#1f6fc0" /><path d="M1 11l5-5 3 3 4-5v9H1z" fill="#7cc6f5" /><circle cx="10" cy="4" r="1.500" fill="#e7554d" /></>, true],
];

function Bar() {
  return (
    <Taskbar>
      <Weather>
        <svg width="15" height="16" viewBox="0 0 15 16" aria-hidden="true">
          <path d="M2 9a3 3 0 0 1 1-5 3 3 0 0 1 5 1v4z" fill="#c8dcf5" />
          <path d="M12 7a5 5 0 0 1-9 4 6 6 0 0 0 9-4z" fill="#f5a742" stroke="#f5a742" />
          <circle cx="10" cy="4.500" r="4" fill="#d8322c" />
          <text x="10" y="7" fontSize="6" textAnchor="middle" fill="#fff">2</text>
        </svg>
        <div>46°F<br />Mostly clear</div>
      </Weather>
      <Apps>
        <AppButton aria-label="Start">
          <svg width="14" height="14" viewBox="0 0 14 14"><path d="M1 1h6v6H1zM7.500 1h6v6h-6zM1 7.500h6v6H1zM7.500 7.500h6v6h-6z" fill="#4cc2f5" /></svg>
        </AppButton>
        <SearchBox>
          <svg width="9" height="9" viewBox="0 0 9 9" aria-hidden="true"><circle cx="3.800" cy="3.800" r="3" fill="none" stroke="#222" /><path d="M6 6l3 3" stroke="#222" /></svg>
          <SearchInput placeholder="Search" aria-label="Search" />
          <svg width="22" height="12" viewBox="0 0 22 12" aria-hidden="true">
            <path d="M1 6l3-1 1-3 1 3 3 1-3 1-1 3-1-3z" fill="#f3b71c" />
            <path d="M9 5l4-1 1-4 1 4 5 1-5 1-1 5-1-5z" fill="#e9a211" />
            <path d="M16 9l2-1 1-2 1 2 2 1-2 1-1 2-1-2z" fill="#6aa9ef" />
          </svg>
        </SearchBox>
        {appIcons.map(([name, art, dot]) => (
          <AppButton key={name} aria-label={name}>
            <svg width="14" height="18" viewBox="0 -2 14 18">{art}{dot && <path d="M6 15.500h3" stroke="#9aa" />}</svg>
          </AppButton>
        ))}
        <AppButton aria-label="Chart trader" $active>
          <svg width="14" height="18" viewBox="0 -2 14 18">
            <rect x="0" y="2" width="14" height="10" fill="#f4f4f4" />
            <rect x="4" y="4" width="6" height="7" fill="#1976c5" />
            <path d="M3 15.500h8" stroke="#5ab8f0" />
          </svg>
        </AppButton>
      </Apps>
      <Tray>
        <svg width="8" height="6" viewBox="0 0 8 6"><path d="M1 5l3-3 3 3" fill="none" stroke="#fff" /></svg>
        <svg width="11" height="10" viewBox="0 0 11 10"><path d="M2 8a2 2 0 0 1 0-4 3 3 0 0 1 6-1v5z" fill="#e8eef5" /><circle cx="8" cy="7" r="2.500" fill="#1686e0" /></svg>
        <svg width="8" height="10" viewBox="0 0 8 10"><rect x="2.500" y="0" width="3" height="6" rx="1.500" fill="#8fc7e8" /><path d="M1 4a3 3 0 0 0 6 0M4 7v3" fill="none" stroke="#8fc7e8" /></svg>
        <svg width="10" height="10" viewBox="0 0 10 10"><path d="M6 1H1v6h8V5M3 9h4M7 0v4h3V0" fill="none" stroke="#eee" /></svg>
        <svg width="8" height="9" viewBox="0 0 8 9"><path d="M0 3h2l2-2v7L2 6H0zM6 3q1 1.500 0 3" fill="none" stroke="#eee" /></svg>
        <Clock dateTime="2025-11-19T05:21">5:21 AM<br />11/19/2025</Clock>
        <svg width="9" height="10" viewBox="0 0 9 10"><path d="M8 5v2H3L1 9V2h4M3 4h2M6 1h3L6 4h3" fill="none" stroke="#eee" strokeWidth=".9" /></svg>
      </Tray>
    </Taskbar>
  );
}

/* ---------- participants ---------- */

const Gallery = styled.aside`
  width: 160px;
  flex: none;
  display: flex;
  flex-direction: column;
  align-items: center;
  background: #1b1b1b;
`;
const Tile = styled.svg`
  display: block;
  width: 90px;
  height: 90px;
  background: #f5f3ee;
`;

function Participant({ index }: { index: number }) {
  return (
    <Tile viewBox="0 0 90 90" role="img" aria-label={`Participant ${index}`}>
      <circle cx="45" cy="41" r="19" fill="#cfcdc1" />
      <path d="M3 90C4 74 12 66 29 61c9 7 23 7 32 0 17 5 25 13 26 29z" fill="#cfcdc1" />
    </Tile>
  );
}

export default function App() {
  return (
    <>
      <Global />
      <Page>
        <Desktop>
          <Workspace>
            <LeftStack>
              <WindowFrame title="F5 Rv10(3070), CME/ESZ25" bar={16}>
                <F5Chart />
              </WindowFrame>
              <LowerRow>
                <HiddenEdge />
                <WindowFrame title="F2 30m0s(516), CME/ESZ25" bar={16}>
                  <F2Chart />
                  <Scroller />
                </WindowFrame>
              </LowerRow>
            </LeftStack>
            <WindowFrame title="3m0s(159), CME/MESZ25" bar={15} end={10}>
              <TradeBody>
                <ChartColumn>
                  <TradeChart />
                  <Scroller />
                </ChartColumn>
                <OrderPanel />
              </TradeBody>
            </WindowFrame>
          </Workspace>
          <Bar />
        </Desktop>
        <Gallery>
          {[1, 2, 3, 4, 5].map((n) => <Participant key={n} index={n} />)}
        </Gallery>
      </Page>
    </>
  );
}
